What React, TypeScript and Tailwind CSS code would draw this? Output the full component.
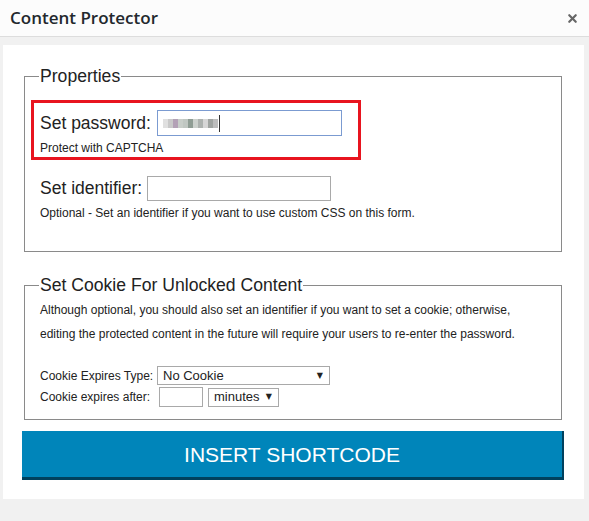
import React from "react";
import { X } from "lucide-react";

const blurCells = [
  "#e0e0e0",
  "#c9c9c9",
  "#b3a1b6",
  "#c8cec9",
  "#c0c7c2",
  "#8f9d94",
  "#ccd1cd",
  "#adb2af",
  "#d6d6d6",
  "#a0a4a1",
  "#bdbdbd",
];

const App: React.FC = () => {
  return (
    <div className="w-[589px] h-[521px] bg-[#f1f1f1] font-['Liberation_Sans',Arial,sans-serif] text-[#222]">
      {/* Header */}
      <div className="h-[37px] bg-[#fcfcfc] border-b border-[#dddddd] flex items-center justify-between pl-[10px] pr-[10px]">
        <h1 className="font-['Open_Sans',sans-serif] font-semibold text-[17px] text-[#23282d]">
          Content Protector
        </h1>
        <X className="w-[13px] h-[13px] text-[#666]" strokeWidth={4} />
      </div>

      {/* Panel */}
      <div className="mt-[8px] ml-[3px] w-[581px] h-[454px] bg-white pt-[21px] pl-[19px] pr-[20px]">
        {/* Properties */}
        <fieldset className="mx-[2px] border border-[#8a8a8a] pl-[6px] pr-[6px] pt-[14px] h-[186px]">
          <legend className="ml-[8px] px-[1px] text-[17.6px] leading-[20px] text-[#222]">
            Properties
          </legend>
          <div className="w-[330px] h-[60px] border-[3px] border-[#e8141f] pl-[6px] pt-[7px]">
            <div className="flex items-center h-[26px]">
              <span className="text-[17.5px] leading-[26px]">Set password:</span>
              <div className="ml-[6px] w-[185px] h-[26px] border border-[#7b9bd1] flex items-center pl-[5px]">
                <div className="flex h-[9px]">
                  {blurCells.map((c, i) => (
                    <div key={i} className="w-[5px] h-[9px]" style={{ backgroundColor: c }} />
                  ))}
                </div>
                <div className="ml-[1px] w-[1px] h-[17px] bg-[#333]" />
              </div>
            </div>
            <p className="text-[12px] leading-[14px] mt-[5px]">Protect with CAPTCHA</p>
          </div>

          <div className="pl-[9px] mt-[16px]">
            <div className="flex items-center h-[25px]">
              <span className="text-[17.5px] leading-[25px]">Set identifier:</span>
              <div className="ml-[5px] w-[184px] h-[25px] border border-[#a9a9a9]" />
            </div>
            <p className="text-[12px] leading-[14px] mt-[5px]">
              Optional - Set an identifier if you want to use custom CSS on this form.
            </p>
          </div>
        </fieldset>

        {/* Cookie */}
        <fieldset className="mx-[2px] mt-[23px] border border-[#8a8a8a] pl-[15px] pr-[6px] h-[145px]">
          <legend className="-ml-[1px] px-[1px] text-[17.6px] leading-[20px] text-[#222]">
            Set Cookie For Unlocked Content
          </legend>
          <p className="text-[12px] leading-[24px] mt-[3px]">
            Although optional, you should also set an identifier if you want to set a cookie; otherwise,
            <br />
            editing the protected content in the future will require your users to re-enter the password.
          </p>
          <div className="mt-[20px] flex items-center h-[19px]">
            <span className="text-[12px] w-[117px]">Cookie Expires Type:</span>
            <div className="w-[173px] h-[19px] border border-[#a9a9a9] flex items-center justify-between pl-[5px] pr-[6px]">
              <span className="text-[13px]">No Cookie</span>
              <span className="text-[8px] font-['DejaVu_Sans',sans-serif]">▼</span>
            </div>
          </div>
          <div className="mt-[2px] flex items-center h-[20px]">
            <span className="text-[12px] w-[119px]">Cookie expires after:</span>
            <div className="w-[44px] h-[20px] border border-[#a9a9a9]" />
            <div className="ml-[5px] w-[71px] h-[19px] border border-[#a9a9a9] flex items-center justify-between pl-[5px] pr-[6px]">
              <span className="text-[13px]">minutes</span>
              <span className="text-[8px] font-['DejaVu_Sans',sans-serif]">▼</span>
            </div>
          </div>
        </fieldset>

        {/* Button */}
        <button className="mt-[11px] w-[542px] h-[49px] bg-[#0085ba] border-b-[3px] border-r-[2px] border-[#00415e] text-white text-[21px] leading-none uppercase">
          Insert Shortcode
        </button>
      </div>
    </div>
  );
};

export default App;
